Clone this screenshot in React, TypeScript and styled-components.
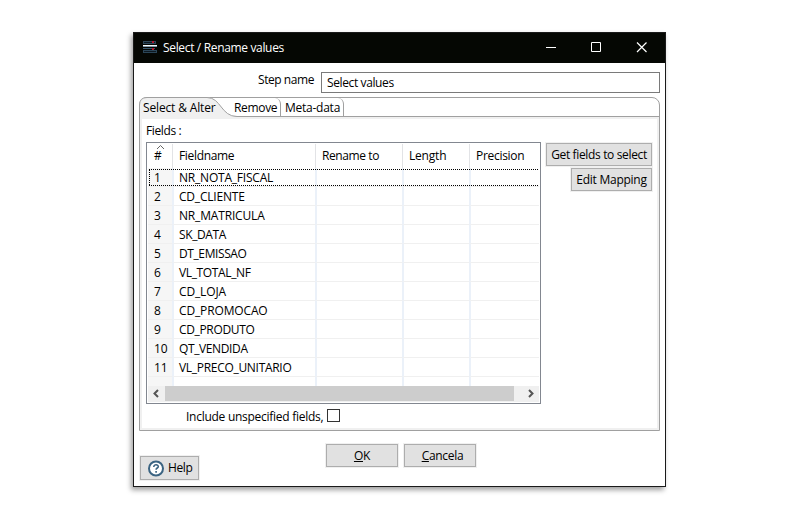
import React from 'react';
import styled, { createGlobalStyle } from 'styled-components';

const GlobalStyle = createGlobalStyle`
  * { box-sizing: border-box; }
  body {
    margin: 0;
    background: #fff;
    color: #000;
    font: 12px/16px "Open Sans", "Noto Sans", sans-serif;
  }
`;

const Desktop = styled.main`
  width: 800px;
  height: 520px;
  padding: 32px 0 0 133px;
  overflow: hidden;
`;

const Dialog = styled.section`
  width: 533px;
  height: 455px;
  border: 1px solid #1a1a1a;
  background: #fff;
  box-shadow: -2px 3px 5px rgba(0, 0, 0, 0.38);
`;

const TitleBar = styled.header`
  display: flex;
  align-items: center;
  height: 30px;
  padding: 0 4px 0 9px;
  background: #050703;
  color: #fff;
`;

const Label = styled.span<{ $ls?: number }>`
  display: inline-block;
  white-space: pre;
  letter-spacing: ${p => p.$ls ?? 0}px;
`;

const Title = styled.h1`
  flex: 1;
  margin: 0 0 0 5px;
  font-size: 12px;
  font-weight: 400;
`;

const WindowControls = styled.div`
  display: flex;
  svg { display: block; width: 46px; height: 30px; }
`;

const StepRow = styled.div`
  display: flex;
  justify-content: flex-end;
  gap: 7px;
  height: 34px;
  padding: 9px 5px 0 0;
`;

const StepInput = styled.div`
  width: 339px;
  height: 21px;
  padding: 2px 0 0 5px;
  border: 1px solid #7a7a7a;
`;

const TabFolder = styled.div`
  width: 521px;
  height: 334px;
  margin-left: 5px;
  border: 1px solid #a0a0a0;
  border-radius: 8px 8px 0 0;
`;

const TabBar = styled.nav`
  position: relative;
  display: flex;
  height: 19px;
  border-bottom: 1px solid #a0a0a0;
`;

const SelectedShape = styled.svg`
  position: absolute;
  left: -1px;
  top: -1px;
`;

const Tab = styled.div<{ $width: number; $pad: number; $edge?: boolean }>`
  position: relative;
  width: ${p => p.$width}px;
  height: 18px;
  padding: 2px 0 0 ${p => p.$pad}px;
  border-right: ${p => (p.$edge ? '1px solid #a0a0a0' : 'none')};
  border-top-right-radius: ${p => (p.$edge ? '6px' : '0')};
`;

const TabPage = styled.div`
  height: 313px;
  padding: 3px 4px 0;
  border: 2px solid #f0f0f0;
`;

const FieldsHeading = styled.div`
  height: 20px;
  padding-top: 1px;
`;

const TableArea = styled.div`
  display: flex;
  align-items: flex-start;
  gap: 5px;
`;

const Table = styled.div`
  width: 395px;
  height: 262px;
  padding: 1px;
  border: 1px solid #828790;
`;

const COLUMNS = '24px 143px 87px 67px 70px';

const HeaderRow = styled.div`
  display: grid;
  grid-template-columns: ${COLUMNS};
  height: 24px;
`;

const HeaderCell = styled.div`
  position: relative;
  padding: 4px 0 0 6px;
  border-left: 1px solid #e2e3e6;
  &:first-child { border-left: 0; }
`;

const SortMark = styled.svg`
  position: absolute;
  left: 8px;
  top: 0;
`;

const Rows = styled.div`
  position: relative;
  height: 218px;
  overflow: hidden;
`;

const Row = styled.div`
  display: grid;
  grid-template-columns: ${COLUMNS};
  height: 19px;
`;

const Cell = styled.div`
  padding: 2px 0 0 5px;
  border-left: 2px solid #ebf1f9;
  border-bottom: 1px solid #f0f0f0;
  &:first-child {
    padding-left: 6px;
    border-left: 0;
    background: #f6f6f6;
  }
`;

const FocusBox = styled.svg`
  position: absolute;
  left: 0;
  top: 0;
`;

const ScrollBar = styled.div`
  display: flex;
  height: 16px;
  background: #f0f0f0;
`;

const ScrollThumb = styled.div`
  width: 349px;
  height: 15px;
  background: #cdcdcd;
`;

const SideButtons = styled.div`
  display: flex;
  flex-direction: column;
  align-items: flex-end;
  gap: 2px;
  padding-top: 1px;
`;

const Button = styled.button<{ $width: number; $height?: number; $indent?: number }>`
  display: flex;
  align-items: center;
  justify-content: center;
  width: ${p => p.$width}px;
  height: ${p => p.$height ?? 23}px;
  padding: 0 0 0 ${p => p.$indent ?? 0}px;
  border: 1px solid #adadad;
  box-shadow: 0 0 0 1px #f0f0f0;
  background: #e1e1e1;
  color: #000;
  font: inherit;
  white-space: nowrap;
  u { text-underline-offset: 1px; }
`;

const HelpButton = styled(Button)`
  justify-content: flex-start;
  gap: 4px;
`;

const CheckRow = styled.label`
  display: grid;
  grid-template-columns: 137px 13px;
  column-gap: 4px;
  padding: 5px 0 0 40px;
`;

const CheckBox = styled.span`
  width: 13px;
  height: 13px;
  border: 1px solid #333;
`;

const Footer = styled.footer`
  display: flex;
  align-items: flex-start;
  padding: 13px 0 0 6px;
`;

const HelpSlot = styled.div`
  margin: 12px 127px 0 0;
`;

const ActionButtons = styled.div`
  display: flex;
  gap: 6px;
`;

const fields: [string, number][] = [
  ['NR_NOTA_FISCAL', -0.21],
  ['CD_CLIENTE', -0.2],
  ['NR_MATRICULA', -0.17],
  ['SK_DATA', -0.4],
  ['DT_EMISSAO', -0.4],
  ['VL_TOTAL_NF', -0.36],
  ['CD_LOJA', -0.14],
  ['CD_PROMOCAO', -0.14],
  ['CD_PRODUTO', -0.35],
  ['QT_VENDIDA', -0.38],
  ['VL_PRECO_UNITARIO', -0.3],
  ['', 0],
];

const headers: [string, number][] = [
  ['Fieldname', -0.33],
  ['Rename to', -0.4],
  ['Length', -0.2],
  ['Precision', -0.3],
];

const StepIcon = () => (
  <svg width="15" height="14" shapeRendering="crispEdges">
    <path d="M.5 .5h12v2H.5zM.5 9.5h13v2H.5z" fill="#0d1820" stroke="#2b4557" />
    <path d="M0 7.5h12" stroke="#35556b" />
    <path d="M0 4h14v1H0z" fill="#f4f8fa" />
    <path d="M0 5h14v1H0z" fill="#7d95a5" />
    <path d="M9 0h2v2H9zM9 7h2v2H9z" fill="#b3152c" />
  </svg>
);

const ScrollArrow = ({ right }: { right?: boolean }) => (
  <svg width={right ? 25 : 17} height="16">
    <path d={right ? 'M15 4l3.5 3.5L15 11' : 'M10 4L6.5 7.5 10 11'} fill="none" stroke="#555" strokeWidth="2" />
  </svg>
);

const HelpIcon = () => (
  <svg width="16" height="17" viewBox="0 0 16 17">
    <circle cx="8" cy="8.5" r="7" fill="#fff" stroke="#3b6482" strokeWidth="2" />
    <path d="M5.8 6.9c0-3 4.7-2.7 4.5-.2-.1 1.4-2.2 1.3-2.2 3M8.1 11v1.7" fill="none" stroke="#3b6482" strokeWidth="1.6" />
  </svg>
);

export default function App() {
  return (
    <Desktop>
      <GlobalStyle />
      <Dialog>
        <TitleBar>
          <StepIcon />
          <Title><Label $ls={-0.34}>Select / Rename values</Label></Title>
          <WindowControls>
            <svg><path d="M23 14.5h10" stroke="#fff" /></svg>
            <svg><path d="M22.5 9.5h9v9h-9z" fill="none" stroke="#fff" /></svg>
            <svg><path d="M22 9.5l9.5 9.5M31.5 9.5L22 19" stroke="#fff" strokeWidth="1.2" /></svg>
          </WindowControls>
        </TitleBar>
        <StepRow>
          <Label $ls={-0.44}>Step name</Label>
          <StepInput><Label $ls={-0.38}>Select values</Label></StepInput>
        </StepRow>
        <TabFolder>
          <TabBar>
            <SelectedShape width="100" height="22">
              <path d="M.5 22V8Q.5.5 8 .5H68C82 .5 82 19.5 98 19.5V22Z" fill="#f0f0f0" />
              <path d="M.5 22V8Q.5.5 8 .5H68C82 .5 82 19.5 98 19.5" fill="none" stroke="#a0a0a0" />
            </SelectedShape>
            <Tab $width={91} $pad={3}><Label $ls={-0.15}>Select &amp; Alter</Label></Tab>
            <Tab $width={50} $pad={3} $edge><Label $ls={-0.33}>Remove</Label></Tab>
            <Tab $width={63} $pad={4} $edge><Label $ls={-0.25}>Meta-data</Label></Tab>
          </TabBar>
          <TabPage>
            <FieldsHeading><Label $ls={-0.37}>Fields :</Label></FieldsHeading>
            <TableArea>
              <Table>
                <HeaderRow>
                  <HeaderCell>
                    <SortMark width="10" height="6"><path d="M1 5l3.5-3.5L8 5" fill="none" stroke="#666" /></SortMark>
                    #
                  </HeaderCell>
                  {headers.map(([name, ls]) => (
                    <HeaderCell key={name}><Label $ls={ls}>{name}</Label></HeaderCell>
                  ))}
                </HeaderRow>
                <Rows>
                  {fields.map(([name, ls], i) => (
                    <Row key={i}>
                      <Cell>{name && i + 1}</Cell>
                      <Cell><Label $ls={ls}>{name}</Label></Cell>
                      <Cell /><Cell /><Cell />
                    </Row>
                  ))}
                  <FocusBox width="391" height="19" shapeRendering="crispEdges">
                    <path d="M1 1.5h390M1 17.5h390M1.5 2v15" fill="none" stroke="#000" strokeDasharray="1 1" />
                  </FocusBox>
                </Rows>
                <ScrollBar>
                  <ScrollArrow />
                  <ScrollThumb />
                  <ScrollArrow right />
                </ScrollBar>
              </Table>
              <SideButtons>
                <Button $width={106}><Label $ls={-0.35}>Get fields to select</Label></Button>
                <Button $width={81}><Label $ls={-0.25}>Edit Mapping</Label></Button>
              </SideButtons>
            </TableArea>
            <CheckRow>
              <Label $ls={-0.27}>Include unspecified fields,</Label>
              <CheckBox />
            </CheckRow>
          </TabPage>
        </TabFolder>
        <Footer>
          <HelpSlot>
            <HelpButton $width={59} $height={24} $indent={7}>
              <HelpIcon />
              <Label $ls={-0.4}>Help</Label>
            </HelpButton>
          </HelpSlot>
          <ActionButtons>
            <Button $width={72}><Label $ls={-0.3}><u>O</u>K</Label></Button>
            <Button $width={72} $indent={5}><Label $ls={-0.3}><u>C</u>ancela</Label></Button>
          </ActionButtons>
        </Footer>
      </Dialog>
    </Desktop>
  );
}
